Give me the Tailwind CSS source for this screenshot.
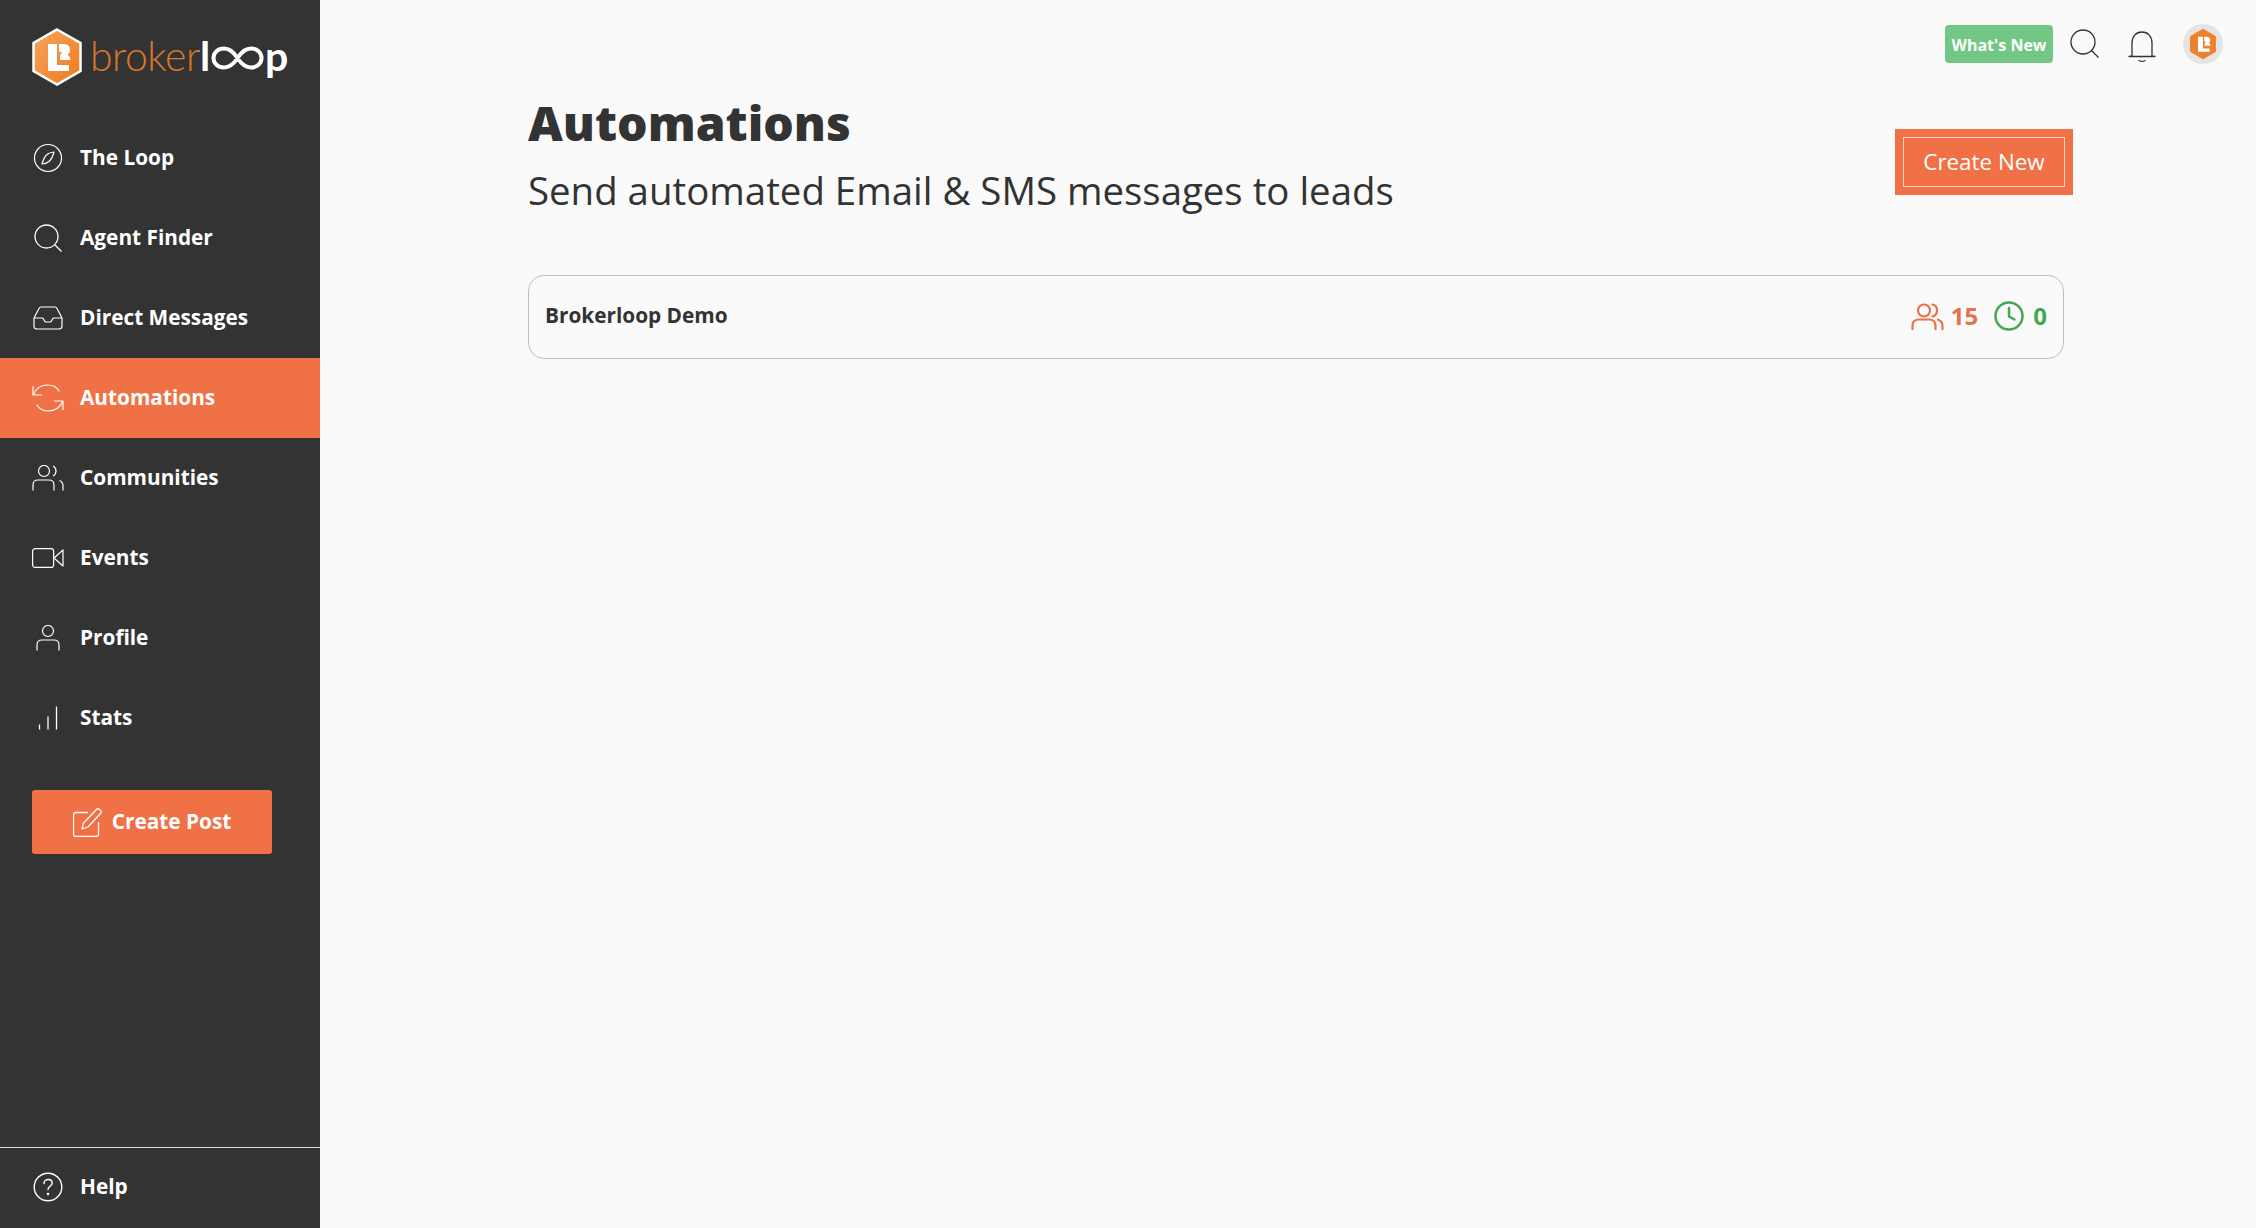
<!DOCTYPE html>
<html lang="en">
<head>
  <meta charset="UTF-8">
  <title>Automations</title>
  <script src="https://cdn.jsdelivr.net/npm/@tailwindcss/browser@4"></script>
</head>
<body class="bg-[#fafafa] font-['Open_Sans',sans-serif] text-[#333333]">
  <div class="flex h-[1228px] w-[2256px] overflow-hidden">

    <!-- Sidebar -->
    <aside class="flex h-full w-[320px] shrink-0 flex-col bg-[#333333] text-white">
      <div class="flex h-[118px] items-start pl-[32px] pt-[28px]">
        <svg class="h-[58px] w-[50px] shrink-0" viewBox="0 0 50 58">
          <defs>
            <linearGradient id="hex" x1="0" y1="0" x2="1" y2="1">
              <stop offset="0" stop-color="#f5a563"/>
              <stop offset="1" stop-color="#f07a1c"/>
            </linearGradient>
          </defs>
          <path d="M25 1.5 48.500 15v28L25 56.500 1.500 43V15z" fill="url(#hex)" stroke="#fff" stroke-width="2.500"/>
          <path d="M16 16h9v21h12v6H16zM27 16h4c5 0 7 2.500 7 6 0 2-1 3.500-2.500 4.500 1.500 1 2.500 3 3 5.500H28v-5l2-2-3-2z" fill="#fff" fill-rule="evenodd"/>
        </svg>
        <div class="ml-[8px] mt-[2px] flex h-[50px] items-center leading-none">
          <span class="text-[41px] font-light tracking-[-0.5px] text-[#d9772b] font-['Lato',sans-serif]">broker</span>
          <span class="text-[41px] font-bold text-white font-['Lato',sans-serif]">l</span>
          <svg class="mx-[1px] mt-[5px] h-[24px] w-[53px]" viewBox="0 0 53 24" fill="none" stroke="#fff" stroke-width="4">
            <path d="M26.500 12C22 5 18 2.500 13 2.500 7 2.500 2.500 6.500 2.500 12S7 21.500 13 21.500c5 0 9-2.500 13.500-9.500S35 2.500 40 2.500c6 0 10.500 4 10.500 9.500S46 21.500 40 21.500c-5 0-9-2.500-13.500-9.500Z"/>
          </svg>
          <span class="text-[41px] font-bold text-white font-['Lato',sans-serif]">p</span>
        </div>
      </div>

      <nav class="text-[20.8px] font-bold">
        <a class="flex h-[80px] items-center">
          <span class="ml-[16px] flex w-[64px] shrink-0 justify-center">
            <svg class="size-[30px]" viewBox="0 0 30 30" fill="none" stroke="currentColor" stroke-width="1.200" stroke-linejoin="round"><circle cx="15" cy="15" r="13.500"/><path d="M21 9c-6 .4-9.500 3-12 12 6-.4 9.500-3 12-12Z"/></svg>
          </span>
          The Loop
        </a>
        <a class="flex h-[80px] items-center">
          <span class="ml-[16px] flex w-[64px] shrink-0 justify-center">
            <svg class="size-[28px]" viewBox="0 0 28 28" fill="none" stroke="currentColor" stroke-width="1.300"><circle cx="12.500" cy="12.500" r="11.500"/><path d="m21 21 6.500 6.500"/></svg>
          </span>
          Agent Finder
        </a>
        <a class="flex h-[80px] items-center">
          <span class="ml-[16px] flex w-[64px] shrink-0 justify-center">
            <svg class="h-[24px] w-[30px]" viewBox="0 0 30 24" fill="none" stroke="currentColor" stroke-width="1.200" stroke-linejoin="round"><path d="M1 12 6 2.500C6.500 1.500 7 1 8 1h14c1 0 1.500.5 2 1.500L29 12v8c0 2-1 3-3 3H4c-2 0-3-1-3-3z"/><path d="M1 12h8c1 0 1.500.5 2 2 .5 1.500 1 2 2 2h4c1 0 1.500-.5 2-2s1-2 2-2h8"/></svg>
          </span>
          Direct Messages
        </a>
        <a class="flex h-[80px] items-center bg-[#f07145]">
          <span class="ml-[16px] flex w-[64px] shrink-0 justify-center">
            <svg class="h-[28px] w-[32px]" viewBox="0 0 32 28" fill="none" stroke="currentColor" stroke-width="1.200" stroke-linecap="round" stroke-linejoin="round"><path d="M1 2.500V11h8.500"/><path d="M1.500 10.500C4 4 10 1 16 1c5 0 9 2.500 11 6"/><path d="M31 25.500V17h-8.500"/><path d="M30.500 17.500C28 24 22 27 16 27c-5 0-9-2.500-11-6"/></svg>
          </span>
          Automations
        </a>
        <a class="flex h-[80px] items-center">
          <span class="ml-[16px] flex w-[64px] shrink-0 justify-center">
            <svg class="h-[26px] w-[32px]" viewBox="0 0 32 26" fill="none" stroke="currentColor" stroke-width="1.200"><circle cx="12" cy="6" r="5.500"/><path d="M1 25.500V20c0-3 2-5 5-5h11c3 0 5 2 5 5v5.500"/><path d="M21 1c1.800 1 3 2.800 3 5s-1.200 4-3 5"/><path d="M31 25.500V21c0-2.500-1.200-4.500-3.500-5.500"/></svg>
          </span>
          Communities
        </a>
        <a class="flex h-[80px] items-center">
          <span class="ml-[16px] flex w-[64px] shrink-0 justify-center">
            <svg class="h-[20px] w-[32px]" viewBox="0 0 32 20" fill="none" stroke="currentColor" stroke-width="1.200" stroke-linejoin="round"><rect x=".6" y=".6" width="21" height="18.800" rx="2.500"/><path d="M31 2v16l-9-8z"/></svg>
          </span>
          Events
        </a>
        <a class="flex h-[80px] items-center">
          <span class="ml-[16px] flex w-[64px] shrink-0 justify-center">
            <svg class="h-[26px] w-[24px]" viewBox="0 0 24 26" fill="none" stroke="currentColor" stroke-width="1.200"><circle cx="12" cy="6" r="5.500"/><path d="M1 25.500V20c0-3 2-5 5-5h12c3 0 5 2 5 5v5.500"/></svg>
          </span>
          Profile
        </a>
        <a class="flex h-[80px] items-center">
          <span class="ml-[16px] flex w-[64px] shrink-0 justify-center">
            <svg class="h-[24px] w-[20px]" viewBox="0 0 20 24" fill="none" stroke="currentColor" stroke-width="1.300"><path d="M1.500 23.500v-5M10 23.500v-13M18.500 23.500V.5"/></svg>
          </span>
          Stats
        </a>
      </nav>

      <button class="ml-[32px] mt-[32px] flex h-[64px] w-[240px] items-center justify-center gap-[10px] rounded-[3px] bg-[#f07145] text-[20.8px] font-bold">
        <svg class="size-[29px]" viewBox="0 0 29 29" fill="none" stroke="currentColor" stroke-width="1.300" stroke-linejoin="round"><path d="M15 4.500H3c-1.500 0-2.500 1-2.500 2.500v19c0 1.500 1 2.500 2.500 2.500h20c1.500 0 2.500-1 2.500-2.500V14"/><path d="M9 21l1.500-6L23.500 1.500c1-1 2-1 3 0l1 1c1 1 1 2 0 3L15 19z"/></svg>
        Create Post
      </button>

      <div class="mt-auto flex h-[81px] items-center border-t border-[#d9d9d9] pb-[2px] text-[20.8px] font-bold">
        <span class="ml-[16px] flex w-[64px] shrink-0 justify-center">
          <svg class="size-[30px]" viewBox="0 0 30 30" fill="none" stroke="currentColor" stroke-width="1.400" stroke-linecap="round"><circle cx="15" cy="15" r="13.800"/><path d="M11 11.500c0-2.500 2-4 4.200-4 2.300 0 4 1.500 4 3.600 0 3.200-4.200 3.200-4.200 6.400"/><circle cx="15" cy="22" r=".6" fill="currentColor"/></svg>
        </span>
        Help
      </div>
    </aside>

    <!-- Main -->
    <main class="flex min-w-0 flex-1 flex-col">
      <div class="flex h-[64px] items-start justify-end pr-[33px] pt-[24px]">
        <span class="mt-[1px] flex h-[38px] w-[108px] items-center justify-center rounded-[4px] bg-[#72c785] pt-[1px] text-[16px] font-bold text-white">What's New</span>
        <svg class="ml-[17px] mt-[5px] size-[29px]" viewBox="0 0 29 29" fill="none" stroke="#333" stroke-width="1.300"><circle cx="13" cy="13" r="12"/><path d="m21.500 21.500 7 7"/></svg>
        <svg class="ml-[29px] mt-[7px] h-[31px] w-[28px]" viewBox="0 0 28 31" fill="none" stroke="#333" stroke-width="1.300" stroke-linecap="round"><path d="M4 25V12C4 5.500 8 1 14 1s10 4.500 10 11v13l3 .5H1z" stroke-linejoin="round"/><path d="M11 29.500c1.500 1 4.500 1 6 0"/></svg>
        <div class="ml-[27px] flex size-[40px] items-center justify-center rounded-full bg-[#e4e4e4]">
          <svg class="h-[32px] w-[28px]" viewBox="0 0 50 58">
            <path d="M25 1.500 48.500 15v28L25 56.500 1.500 43V15z" fill="#f0812c"/>
            <path d="M16 16h9v21h12v6H16zM27 16h4c5 0 7 2.500 7 6 0 2-1 3.500-2.500 4.500 1.500 1 2.500 3 3 5.500H28v-5l2-2-3-2z" fill="#fff" fill-rule="evenodd"/>
          </svg>
        </div>
      </div>

      <div class="ml-[208px] mr-[183px] mt-[27px]">
        <div class="flex items-start justify-between">
          <div>
            <h1 class="text-[48px] font-extrabold leading-[64px]">Automations</h1>
            <p class="mt-[8px] text-[38.4px] leading-[54px]">Send automated Email &amp; SMS messages to leads</p>
          </div>
          <button class="mt-[38px] h-[66px] w-[178px] bg-[#f07145] p-[8px]">
            <span class="flex size-full items-center justify-center border border-white/70 text-[22.4px] text-white">Create New</span>
          </button>
        </div>

        <div class="mr-[9px] mt-[58px] flex h-[84px] items-center justify-between rounded-[16px] border border-[#bdbdbd] pb-[2px] pl-[16px] pr-[16px]">
          <span class="text-[20.8px] font-bold">Brokerloop Demo</span>
          <div class="flex items-center text-[24px] font-bold">
            <svg class="h-[27px] w-[33px] text-[#e8704a]" viewBox="0 0 33 27" fill="none" stroke="currentColor" stroke-width="2.200" stroke-linecap="round"><circle cx="13" cy="7.500" r="6"/><path d="M1.500 26v-3c0-4 2.500-6.500 6.500-6.500h10c4 0 6.500 2.500 6.500 6.500v3"/><path d="M21.500 1.500c2.800.6 4.500 3 4.500 6s-1.700 5.400-4.500 6"/><path d="M31.500 26v-3c0-3-1.500-5.500-4.500-6.300"/></svg>
            <span class="ml-[7px] text-[#e8704a]">15</span>
            <svg class="ml-[16px] size-[30px] text-[#43a850]" viewBox="0 0 30 30" fill="none" stroke="currentColor" stroke-width="2.500" stroke-linecap="round" stroke-linejoin="round"><circle cx="15" cy="15" r="13.500"/><path d="M15 7v8.500l5.500 3"/></svg>
            <span class="ml-[9px] text-[#43a850]">0</span>
          </div>
        </div>
      </div>
    </main>
  </div>
</body>
</html>
